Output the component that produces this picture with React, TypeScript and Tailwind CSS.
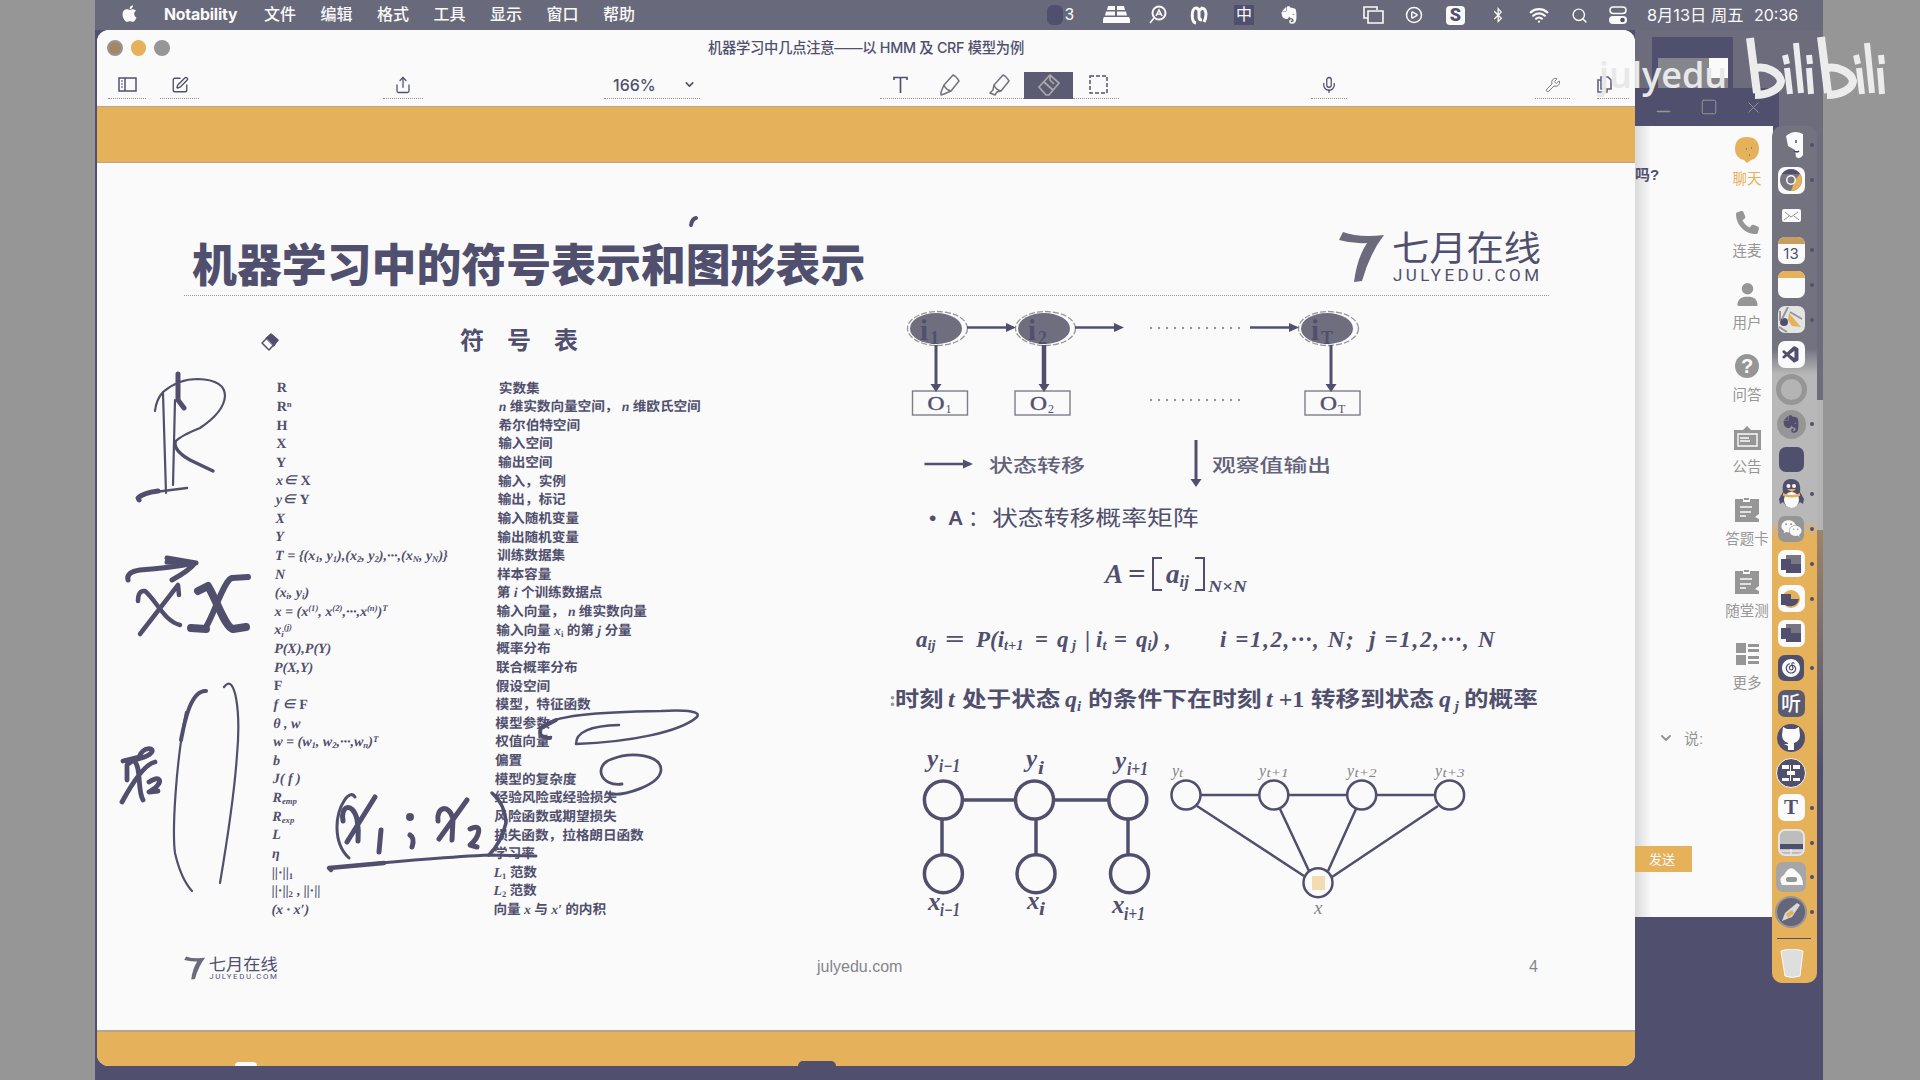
import React from "react";
import {
  FaApple, FaGithub, FaQq, FaWeixin, FaEvernote, FaBluetoothB, FaChrome, FaPhone, FaUser, FaCommentDots,
} from "react-icons/fa6";
import { SiNeteasecloudmusic } from "react-icons/si";
import { VscVscode } from "react-icons/vsc";
import { ChevronDown, Mic, Minus, PanelLeft, Search, Share, Square, SquarePen, Wifi, Wrench, X, CirclePlay } from "lucide-react";

const NAVY = "#50506e";
const GRAY = "#969696";
const SERIF = "font-['Liberation_Serif','Noto_Sans_CJK_SC',serif]";
const SANS = "font-['Liberation_Sans','Noto_Sans_CJK_SC',sans-serif]";
const SVG_SERIF = "'Liberation Serif','Noto Sans CJK SC',serif";

function MenuBar() {
  const menus = ["文件", "编辑", "格式", "工具", "显示", "窗口", "帮助"];
  return (
    <header className="flex h-[30px] w-full items-center bg-[#69697c] text-[16px] leading-none text-[#fafafa]">
      <FaApple className="-mt-1 ml-[25px] size-[19px]" />
      <span className="ml-[25px] w-[75px] whitespace-nowrap font-['Inter'] text-[15.8px] font-bold tracking-[-0.2px]">Notability</span>
      <nav className="ml-[25px] flex gap-[24.5px] font-medium">
        {menus.map((m) => <span key={m} className="w-8">{m}</span>)}
      </nav>
      <div className="ml-[412px] flex items-center">
        <span className="h-[20px] w-[16px] rounded-[6px] bg-[#50506e]" />
        <span className="ml-[2px] w-[10px]">3</span>
        <svg className="ml-[28px]" width="27" height="18" viewBox="0 0 27 18" fill="#fafafa">
          <path d="M5 0h7v4H4zM14 0h7l1 4h-8zM3 5.500h9v4H2zM14 5.500h9l1 4H14zM1 11h25l1 2v4H0v-4z" />
        </svg>
        <svg className="ml-[19px]" width="18" height="20" viewBox="0 0 18 20" fill="none" stroke="#fafafa" strokeWidth="2">
          <circle cx="10" cy="8" r="6.500" /><path d="M5 13l-4 5M7 11l3-6 3 6M8 9h4" strokeWidth="1.600" />
        </svg>
        <svg className="ml-[23px]" width="18" height="19" viewBox="0 0 18 19" fill="none" stroke="#fafafa" strokeWidth="3">
          <path d="M6 17c-5-1-5-15 0-15q3 0 3 4v5q0 3 3 3M11 2c6 0 6 8 3 14M9 5l3-3" />
        </svg>
        <span className="ml-[26px] flex h-5 w-5 items-center justify-center bg-[#50506e] text-[16px]">中</span>
        <FaEvernote className="ml-[25px] size-[20px]" />
        <svg className="ml-[64px]" width="21" height="18" viewBox="0 0 21 18" fill="none" stroke="#fafafa" strokeWidth="1.600">
          <path d="M5 12H1V1h13v3M5 5h15v12H5z" />
        </svg>
        <CirclePlay className="ml-[21px] size-[18px]" strokeWidth={2} />
        <span className="ml-[23px] flex h-[19px] w-[19px] items-center justify-center rounded bg-[#fafafa] font-['Roboto'] text-[18px] font-black text-[#50506e]">S</span>
        <FaBluetoothB className="ml-[25px] size-[16px]" />
        <Wifi className="ml-[23px] size-[20px]" strokeWidth={2.6} />
        <Search className="ml-[22px] size-[17px]" strokeWidth={2} />
        <svg className="ml-[21px]" width="18" height="18" viewBox="0 0 18 18">
          <rect x="1" y="1" width="16" height="6.500" rx="3.200" fill="none" stroke="#fafafa" strokeWidth="1.500" />
          <rect x="0" y="10" width="18" height="8" rx="4" fill="#fafafa" /><circle cx="13.500" cy="14" r="2.300" fill={NAVY} />
        </svg>
        <span className="ml-[20px] w-[107px] whitespace-nowrap font-['Inter','Noto_Sans_CJK_SC'] text-[16.3px]">8月13日 周五</span>
        <span className="font-['Inter'] text-[16px]">20:36</span>
      </div>
    </header>
  );
}

function Tool({ className, children }: { className: string; children?: React.ReactNode }) {
  return <div className={"flex h-[28px] shrink-0 items-center border-b border-dotted border-[#969696] " + className}>{children}</div>;
}

function Toolbar() {
  return (
    <div className="flex h-[76px] flex-col bg-[#fafafa] text-[#50506e]">
      <div className="flex h-[36px] items-center">
        <div className="flex w-[611px] gap-[8px] pl-[10px]">
          <i className="size-[15.500px] rounded-full border-2 border-[#969696] bg-[#a58562]" />
          <i className="size-[15.500px] rounded-full bg-[#e5b15b]" />
          <i className="size-[15.500px] rounded-full bg-[#969696]" />
        </div>
        <div className="whitespace-nowrap font-['Inter','Noto_Sans_CJK_SC'] text-[14.3px] font-medium tracking-[-0.27px]">机器学习中几点注意——以 HMM 及 CRF 模型为例</div>
      </div>
      <div className="flex items-center pt-[5px]">
        <Tool className="ml-[11px] w-[38px] justify-center">
          <svg width="19" height="15" viewBox="0 0 19 15" fill="none" stroke={NAVY} strokeWidth="1.500">
            <rect x="1" y="1" width="17" height="13" /><path d="M7 1v13" /><path d="M3 4h2M3 7h2M3 10h2" strokeWidth="1" />
          </svg>
        </Tool>
        <Tool className="ml-[14px] w-[39px] justify-center"><SquarePen size={18} strokeWidth={1.8} /></Tool>
        <Tool className="ml-[184px] w-[40px] justify-center"><Share size={18} strokeWidth={1.7} /></Tool>
        <Tool className="ml-[181px] w-[96px] justify-between pr-[4px] pl-[9px]">
          <span className="font-['Inter'] text-[16px] font-medium">166%</span><ChevronDown size={13} strokeWidth={3} />
        </Tool>
        <Tool className="ml-[180px] w-[144px] justify-start">
          <svg className="ml-[13px]" width="15" height="18" viewBox="0 0 15 18" stroke={NAVY} fill="none" strokeWidth="1.700"><path d="M1 4V1.500h13V4M7.500 1v16" /></svg>
          <Marker className="ml-[31px]" wide={false} />
          <Marker className="ml-[28px]" wide />
        </Tool>
        <div className="flex h-[27px] w-[49px] items-center justify-center bg-[#5b5b74]">
          <svg width="22" height="22" viewBox="0 0 22 22" fill="none" stroke="#a9a9a9" strokeWidth="1.700">
            <path d="M1 13L12 1l9 8-10 12H8zM6 8l9 8M12 1v5l4 4" />
          </svg>
        </div>
        <Tool className="w-[46px] justify-start">
          <svg className="ml-[16px]" width="19" height="19" viewBox="0 0 19 19" fill="none" stroke={NAVY} strokeWidth="1.500" strokeDasharray="4 2"><rect x="1" y="1" width="17" height="17" /></svg>
        </Tool>
        <Tool className="ml-[192px] w-[36px] justify-center"><Mic size={18} strokeWidth={1.7} /></Tool>
        <Tool className="ml-[188px] w-[35px] justify-center text-[#77777f]"><Wrench size={16} strokeWidth={1.500} /></Tool>
        <Tool className="ml-[27px] w-[32px] justify-start">
          <svg width="15" height="17" viewBox="0 0 15 17" fill="none" stroke="#62627a" strokeWidth="1.600"><path d="M4 1h7l3 3v9H4zM4 4H1v12h9v-3" /></svg>
        </Tool>
      </div>
    </div>
  );
}

function Marker({ className, wide }: { className: string; wide: boolean }) {
  return (
    <svg className={className} width="22" height="22" viewBox="0 0 22 22" fill="none" stroke="#72727e" strokeWidth="1.500" strokeLinejoin="round">
      <path d="M5 11L14 1q3 1 6 6l-8 10q-5-1-7-6z" />
      <path d={wide ? "M5 11l-1 5-3 3 5 2 2-3 4-1" : "M5 11l-3 7v3l3-1 7-3"} />
    </svg>
  );
}

function Logo({ width, height }: { width: number; height: number }) {
  return (
    <svg width={width} height={height} viewBox="0 0 202 54">
      <path d="M4 3Q20 9 45 6Q31 24 23 52L15 53Q18 29 28 14Q14 15 0 11Z" fill="#6b6b7c" />
      <text x="53" y="32" fontSize="35" textLength="149" lengthAdjust="spacingAndGlyphs" fill={NAVY} fontFamily="'Noto Sans CJK SC',sans-serif">七月在线</text>
      <text x="54" y="52" fontSize="17" textLength="146" fill={NAVY} fontFamily="Roboto,sans-serif">JULYEDU.COM</text>
    </svg>
  );
}

const B = ({ children }: { children: React.ReactNode }) => <b className="not-italic">{children}</b>;
const Sub = ({ children }: { children: React.ReactNode }) => <sub className="text-[0.62em]">{children}</sub>;
const Sup = ({ children }: { children: React.ReactNode }) => <sup className="text-[0.62em]">{children}</sup>;

const symbols: [React.ReactNode, React.ReactNode][] = [
  [<B>R</B>, "实数集"],
  [<B>R<Sup>n</Sup></B>, <><i>n</i> 维实数向量空间， <i>n</i> 维欧氏空间</>],
  [<B>H</B>, "希尔伯特空间"],
  [<B>X</B>, "输入空间"],
  [<B>Y</B>, "输出空间"],
  [<>x∈ <B>X</B></>, "输入，实例"],
  [<>y∈ <B>Y</B></>, "输出，标记"],
  ["X", "输入随机变量"],
  ["Y", "输出随机变量"],
  [<>T = {"{"}(x<Sub>1</Sub>, y<Sub>1</Sub>),(x<Sub>2</Sub>, y<Sub>2</Sub>),···,(x<Sub>N</Sub>, y<Sub>N</Sub>){"}"}</>, "训练数据集"],
  ["N", "样本容量"],
  [<>(x<Sub>i</Sub>, y<Sub>i</Sub>)</>, <>第 <i>i</i> 个训练数据点</>],
  [<>x = (x<Sup>(1)</Sup>, x<Sup>(2)</Sup>,···,x<Sup>(n)</Sup>)<Sup>T</Sup></>, <>输入向量， <i>n</i> 维实数向量</>],
  [<>x<Sub>i</Sub><Sup>(j)</Sup></>, <>输入向量 <i>x</i><Sub>i</Sub> 的第 <i>j</i> 分量</>],
  ["P(X),P(Y)", "概率分布"],
  ["P(X,Y)", "联合概率分布"],
  [<B>F</B>, "假设空间"],
  [<>f ∈ <B>F</B></>, "模型，特征函数"],
  ["θ , w", "模型参数"],
  [<>w = (w<Sub>1</Sub>, w<Sub>2</Sub>,···,w<Sub>n</Sub>)<Sup>T</Sup></>, "权值向量"],
  ["b", "偏置"],
  ["J( f )", "模型的复杂度"],
  [<>R<Sub>emp</Sub></>, "经验风险或经验损失"],
  [<>R<Sub>exp</Sub></>, "风险函数或期望损失"],
  ["L", "损失函数，拉格朗日函数"],
  ["η", "学习率"],
  [<span className="not-italic">||·||<Sub>1</Sub></span>, <><i>L</i><Sub>1</Sub> 范数</>],
  [<span className="not-italic">||·||<Sub>2</Sub> , ||·||</span>, <><i>L</i><Sub>2</Sub> 范数</>],
  ["(x · x′)", <>向量 <i>x</i> 与 <i>x′</i> 的内积</>],
];

function SymbolTable() {
  return (
    <div className={"w-[783px] " + SERIF}>
      <h2 className="flex h-[83px] items-center gap-[23px] pt-[6px] pl-[363px] text-[24px] font-bold"><span>符</span><span>号</span><span>表</span></h2>
      <div className="origin-top -skew-x-[0.6deg] text-[13.6px] font-semibold">
        {symbols.map(([sym, text], i) => (
          <div key={i} className="flex h-[18.64px] items-center whitespace-nowrap pl-[180px] leading-none">
            <span className="w-[222px] text-[14px] italic">{sym}</span>
            <span>{text}</span>
          </div>
        ))}
      </div>
    </div>
  );
}

function Arrow({ x1, y1, x2, y2, w = 2.5 }: { x1: number; y1: number; x2: number; y2: number; w?: number }) {
  const head = x1 === x2
    ? `${x2 - 5.5},${y2 - 8} ${x2 + 5.5},${y2 - 8} ${x2},${y2}`
    : `${x2 - 10},${y2 - 4.5} ${x2 - 10},${y2 + 4.5} ${x2},${y2}`;
  return <g><line x1={x1} y1={y1} x2={x2 - (x1 === x2 ? 0 : 3)} y2={y2 - (x1 === x2 ? 3 : 0)} stroke={NAVY} strokeWidth={w} /><polygon points={head} fill={NAVY} /></g>;
}

function HmmDiagram() {
  const nodes = [{ x: 936, s: "1", bx: 912.5 }, { x: 1044, s: "2", bx: 1015 }, { x: 1327, s: "T", bx: 1305 }];
  return (
    <svg className="block" width="755" height="204" viewBox="880 296 755 204" fontFamily={SVG_SERIF}>
      {nodes.map((n) => (
        <g key={n.s}>
          <ellipse cx={n.x + 1.5} cy="328.500" rx="30" ry="17" fill="#fafafa" stroke={GRAY} strokeWidth="1.300" strokeDasharray="6 2" />
          <ellipse cx={n.x} cy="328.500" rx="26" ry="15.500" fill="#6e6e7e" />
          <text x={n.x - 16} y="340" fontSize="29" fontWeight="bold" fill={NAVY}>i</text>
          <text x={n.x - 6} y="344" fontSize="18" fontWeight="bold" fill={NAVY}>{n.s}</text>
          <rect x={n.bx} y="391" width="55" height="24" fill="none" stroke="#7d7d88" strokeWidth="1.400" />
          <text x={n.bx + 15} y="409.500" fontSize="18" textLength="17" lengthAdjust="spacingAndGlyphs" fill={NAVY} stroke={NAVY} strokeWidth="0.400">O</text>
          <text x={n.bx + 33} y="413" fontSize="12" fill={NAVY}>{n.s}</text>
        </g>
      ))}
      <Arrow x1={967} y1={327.5} x2={1016} y2={327.5} />
      <Arrow x1={1075} y1={327.5} x2={1124} y2={327.5} />
      <Arrow x1={1250} y1={327.5} x2={1299} y2={327.5} />
      <Arrow x1={936} y1={345} x2={936} y2={392} w={3} />
      <Arrow x1={1044} y1={345} x2={1044} y2={392} w={4.5} />
      <Arrow x1={1331} y1={345} x2={1331} y2={392} w={3} />
      <path d="M1150 328H1241M1150 400H1241" stroke={GRAY} strokeWidth="2" strokeDasharray="2 6" />
      <Arrow x1={924.5} y1={464} x2={973} y2={464} />
      <Arrow x1={1196} y1={440} x2={1196} y2={487} w={3} />
      <g fontSize="18" fill="#62627a" fontWeight="500">
        <text x="989" y="471.500" textLength="96" lengthAdjust="spacingAndGlyphs">状态转移</text>
        <text x="1212" y="471.500" textLength="119" lengthAdjust="spacingAndGlyphs">观察值输出</text>
      </g>
    </svg>
  );
}

function GraphDiagram() {
  const tops = [943.4, 1034.5, 1127.8];
  const bottoms = [943.4, 1036, 1129.5];
  const ys = [1186, 1273.8, 1361.7, 1449.6];
  const label = (x: number, y: number, m: string, s: string, w: number, dy = 5) => (
    <g key={m + s} fontStyle="italic" fontWeight="bold" fill={NAVY}>
      <text x={x} y={y} fontSize="25">{m}</text>
      <text x={x + 12} y={y + dy} fontSize="18" textLength={w} lengthAdjust="spacingAndGlyphs">{s}</text>
    </g>
  );
  return (
    <svg className="block" width="755" height="200" viewBox="880 734 755 200" fontFamily={SVG_SERIF}>
      <g stroke={NAVY} strokeWidth="3.500" fill="none">
        <path d="M963 800H1015M1054 800H1108M942 820V854M1036 820V854M1128 820V854" />
        {tops.map((x) => <circle key={x} cx={x} cy="800" r="19" />)}
        {bottoms.map((x) => <circle key={x} cx={x} cy="873.700" r="19" />)}
      </g>
      {label(927, 767, "y", "i−1", 21)}
      {label(1026, 767, "y", "i", 6, 7)}
      {label(1115, 769, "y", "i+1", 21, 6)}
      {label(928, 910, "x", "i−1", 20, 6)}
      {label(1027, 909, "x", "i", 6, 6)}
      {label(1112, 913, "x", "i+1", 21, 7)}
      <g stroke={NAVY} strokeWidth="2.500" fill="none">
        <path d="M1201 795H1259M1289 795H1347M1377 795H1435M1197 806L1304 876M1280 809L1309 871M1356 809L1328 871M1438 806L1332 877" />
        {ys.map((x) => <circle key={x} cx={x} cy="795" r="14.500" />)}
        <circle cx="1318" cy="882.700" r="14.500" />
      </g>
      <rect x="1312" y="876" width="13" height="14" fill="#f2dcb4" />
      <g fontStyle="italic" fill="#85858c">
        {["t", "t+1", "t+2", "t+3"].map((s, i) => (
          <g key={s}><text x={[1172, 1259, 1347, 1435][i]} y="776" fontSize="16">y</text>
            <text x={[1179, 1266.5, 1354.5, 1442.5][i]} y="777" fontSize="12" textLength={i ? 22 : 4} lengthAdjust="spacingAndGlyphs">{s}</text></g>
        ))}
        <text x="1314" y="914" fontSize="19">x</text>
      </g>
    </svg>
  );
}

function Formulas() {
  return (
    <div className={"whitespace-nowrap leading-none " + SERIF}>
      <div className={"flex h-[34px] items-center pl-[49px] text-[21px] " + SANS}>
        <span className="w-[19px]">•</span><span className="w-[20px] text-[21px] font-bold">A</span><span className="w-[24px]">：</span>
        <span className="origin-left scale-x-[1.23]">状态转移概率矩阵</span>
      </div>
      <div className="flex h-[80px] items-center pl-[225px] text-[27px] font-semibold italic">
        <span className="w-[23px]">A</span><span className="w-[24px] origin-left scale-x-[1.15] not-italic">=</span>
        <span className="h-[34px] w-[10px] border-y-2 border-l-2 border-[#50506e]" />
        <span className="w-[33px] pl-[4px]">a<Sub>ij</Sub></span>
        <span className="h-[34px] w-[10px] border-y-2 border-r-2 border-[#50506e]" />
        <span className="origin-left scale-x-[1.12] self-end pb-[19px] pl-[3px] text-[17px]">N×N</span>
      </div>
      <div className="flex h-[50px] items-center pl-[36px] text-[23px] font-semibold italic">
        <span className="w-[29px]">a<Sub>ij</Sub></span><span className="w-[31px] origin-left scale-x-150 not-italic">=</span>
        <span className="w-[59px]">P(i<Sub>t+1</Sub></span><span className="w-[22px] not-italic">=</span><span className="w-[28px]">q<Sub> j</Sub></span>
        <span className="w-[11px] not-italic">|</span><span className="w-[18px]">i<Sub>t</Sub></span><span className="w-[22px] not-italic">=</span>
        <span className="w-[84px]">q<Sub>i</Sub>) ,</span>
        <span className="w-[149px] tracking-[1.6px]">i =1,2,···, N;</span><span className="tracking-[1.7px]">j =1,2,···, N</span>
      </div>
      <div className="flex h-[70px] items-center pl-[9px] text-[21px] font-semibold">
        <span className="w-[6px] text-[#969696]">:</span>
        <span className="w-[53px] origin-left scale-x-[1.15]">时刻</span><i className="w-[14px] text-[24px]">t</i>
        <span className="w-[103px] origin-left scale-x-[1.17]">处于状态</span><i className="w-[23px] text-[24px]">q<Sub>i</Sub></i>
        <span className="w-[178px] origin-left scale-x-[1.18]">的条件下在时刻</span><span className="w-[45px] text-[24px]"><i>t</i> +1</span>
        <span className="w-[128px] origin-left scale-x-[1.17]">转移到状态</span><i className="w-[25px] text-[24px]">q<Sub> j</Sub></i>
        <span className="origin-left scale-x-[1.17]">的概率</span>
      </div>
    </div>
  );
}

function Ink() {
  return (
    <svg className="pointer-events-none absolute inset-0" width="1538" height="867" viewBox="97 163 1538 867" fill="none" stroke={NAVY} strokeLinecap="round" strokeLinejoin="round">
      <path d="M696 218Q692 219 691 225" strokeWidth="4" />
      <path d="M178 374V400L184 408" strokeWidth="5" />
      <path d="M155 411Q156 400 163 392Q178 379 198 379Q225 380 225 396Q224 412 200 428Q180 436 175 442M163 393L166 493M175 400L173 485" strokeWidth="2.200" />
      <path d="M175 442Q174 451 190 460L213 471" strokeWidth="3.500" />
      <path d="M155 492L187 488" strokeWidth="2.500" />
      <path d="M139 500L138 498Q143 493 158 491" strokeWidth="5" />
      <path d="M128 580Q126 572 140 570Q170 568 195 563Q190 570 172 580M167 558L196 563L167 562" strokeWidth="5" />
      <path d="M138 601Q138 590 145 591C156 600 164 621 180 625M140 634L178 585L179 595" strokeWidth="4.500" />
      <path d="M198 591L208 586C217 601 225 627 233 629L246 627M191 628L206 629" strokeWidth="8" />
      <path d="M206 627C215 612 224 580 232 578L248 577" strokeWidth="6" />
      <path d="M206 691C190 690 184 725 181 740" strokeWidth="4" />
      <path d="M186 712C176 762 172 830 175 853Q181 879 192 891M224 687C235 672 241 710 237 755Q234 800 220 883" strokeWidth="2.200" />
      <path d="M122 802C134 780 145 764 155 762M123 761L139 757C144 745 156 748 151 753C145 760 134 757 127 765V780M133 759C142 767 137 790 143 800M149 782C160 775 163 781 155 788L149 792L158 791" strokeWidth="4.800" />
      <path d="M355 797C350 788 337 806 337 827Q337 847 349 858" strokeWidth="3" />
      <path d="M343 821C340 806 352 801 357 819Q359 830 358 841M375 797L347 842M381 830L379 852M410 835Q415 838 412 847M438 821C436 807 449 803 453 819L452 840M467 800L439 839M470 829C484 822 479 838 470 845L477 847" strokeWidth="5" />
      <circle cx="410" cy="817" r="3" strokeWidth="2" fill={NAVY} />
      <path d="M492 793Q505 804 506 823Q501 843 489 855" strokeWidth="3.500" />
      <path d="M331 870L329 868Q440 857 490 855L536 856" strokeWidth="3" />
      <path d="M331 870L329 868L384 863" strokeWidth="4.500" />
      <path d="M551 737Q538 740 541 728C550 715 600 712 661 711Q703 709 697 717C680 732 630 742 576 744Q576 726 619 725" strokeWidth="2.500" />
      <path d="M550 738Q537 738 541 728L556 720" strokeWidth="4" />
      <path d="M622 784C600 787 593 765 612 759C632 751 661 755 661 770C660 785 625 796 609 794" strokeWidth="2.800" />
      <path d="M262 343L271 334L278 340L269 350Z" strokeWidth="1.500" fill="#fafafa" />
      <path d="M266 338L271 334L278 340L274 346Z" strokeWidth="1" fill={NAVY} />
    </svg>
  );
}

function Slide() {
  return (
    <section className="relative flex h-[867px] flex-col bg-[#fafafa] text-[#50506e]">
      <div className="flex h-[133px]">
        <div className="ml-[87px] flex w-[1365px] justify-between border-b border-dotted border-[#969696]">
          <h1 className="mt-[69px] ml-[8px] h-[60px] whitespace-nowrap font-['Noto_Sans_CJK_SC'] text-[44.9px] leading-[62px] font-black">机器学习中的符号表示和图形表示</h1>
          <div className="mt-[66px] mr-[8px]"><Logo width={202} height={54} /></div>
        </div>
      </div>
      <div className="flex h-[638px]">
        <SymbolTable />
        <div><HmmDiagram /><Formulas /><GraphDiagram /></div>
      </div>
      <footer className="flex h-[66px] items-center pl-[87px] font-['Liberation_Sans'] text-[16px] text-[#85858c]">
        <span className="w-[633px]"><Logo width={94} height={25} /></span>
        <span className="w-[712px]">julyedu.com</span><span>4</span>
      </footer>
      <Ink />
    </section>
  );
}

function NotabilityWindow() {
  return (
    <main className="absolute top-[30px] left-[2px] flex h-[1036px] w-[1538px] flex-col overflow-hidden rounded-[12px] bg-[#fafafa]">
      <Toolbar />
      <div className="h-[58px] shrink-0 border-y border-b-2 border-[#b5a68c] bg-[#e5b15b]" />
      <div className="-mt-px"><Slide /></div>
      <div className="flex grow items-end border-t-2 border-[#b5a68c] bg-[#e5b15b] pl-[138px]">
        <span className="h-[4px] w-[22px] rounded-t-full bg-[#fafafa]" />
        <span className="ml-[541px] h-[5px] w-[38px] rounded-t-full bg-[#50506e]" />
      </div>
    </main>
  );
}

function Clipboard() {
  return (
    <svg width="24" height="24" viewBox="0 0 24 24"><path d="M0 1h8v3h7V1h9v15l-4 3 4 2v3H0z" fill={GRAY} /><path d="M9 0h5v2H9z" fill={GRAY} /><path d="M5 9h12M5 14h11M5 18h6" stroke="#fafafa" strokeWidth="1.500" /></svg>
  );
}

function ChatWindow() {
  const items: { label: string; icon: React.ReactNode }[] = [
    { label: "聊天", icon: <svg width="26" height="26" viewBox="0 0 26 26"><path d="M13 0q12 0 12 12 0 9-8 11l-4 3-3-3Q1 21 1 12 1 0 13 0z" fill="#e5b15b" /><path d="M12 12h1M17 11h1M15 18h1" stroke={NAVY} /></svg> },
    { label: "连麦", icon: <FaPhone size={23} className="-scale-x-100 rotate-90" /> },
    { label: "用户", icon: <FaUser size={23} /> },
    { label: "问答", icon: <span className="flex size-[24px] items-center justify-center rounded-full bg-[#969696] text-[20px] font-bold text-[#fafafa]">?</span> },
    { label: "公告", icon: <svg width="27" height="24" viewBox="0 0 27 24"><path d="M9 4l4-4 4 4h10v20H0V4z" fill={GRAY} /><path d="M4 8h19v12H4zM6 12h9M6 15h10" fill="none" stroke="#fafafa" strokeWidth="1.400" /></svg> },
    { label: "答题卡", icon: <Clipboard /> },
    { label: "随堂测", icon: <Clipboard /> },
    { label: "更多", icon: <svg width="23" height="22" viewBox="0 0 23 22" fill={GRAY}><path d="M0 0h10v10H0zM12 1h11v3H12zM12 6h11v3H12zM0 12h10v10H0zM12 13h11v3H12zM12 18h11v3H12z" /></svg> },
  ];
  return (
    <aside className={"absolute top-[88px] left-[1540px] h-[829px] w-[144px] bg-[#50506e] leading-none text-[#969696] " + SANS}>
      <div className="flex h-[38px] items-center gap-[26px] pl-[18px]"><Minus size={21} strokeWidth={1.500} className="mt-[8px]" /><Square size={18} strokeWidth={1.300} /><X size={19} strokeWidth={1.200} /></div>
      <div className="flex h-[791px] w-[138px] bg-linear-to-r from-[#dadada] via-[#fafafa] via-12% to-[#fafafa]">
        <div className="flex w-[78px] shrink-0 flex-col">
          <p className="mt-[41px] h-[14px] whitespace-nowrap text-[15px] font-bold text-[#50506e]">吗?</p>
          <div className="mt-[549px] flex items-center gap-[10px] pl-[23px] text-[15px]"><ChevronDown size={16} strokeWidth={3} className="shrink-0" /><span className="whitespace-nowrap">说:</span></div>
          <div className="mt-[100px] flex h-[26px] w-[57px] items-center justify-center bg-[#e5b15b] pr-[3px] text-[13px] text-[#fafafa]">发送</div>
        </div>
        <div className="flex w-[68px] shrink-0 flex-col pt-[10px]">
          {items.map((it, i) => (
            <div key={it.label} className={"flex h-[72px] flex-col items-center " + (i === 0 ? "text-[#e5b15b]" : "")}>
              <div className="flex h-[28px] items-center">{it.icon}</div>
              <span className="mt-[8px] whitespace-nowrap text-[14.5px]">{it.label}</span>
            </div>
          ))}
        </div>
      </div>
    </aside>
  );
}

const tile = "flex size-[27px] items-center justify-center overflow-hidden rounded-[7px] ";
function OfficeTile({ round }: { round?: boolean }) {
  return <div className={tile + "bg-[#fafafa]"}><svg width="22" height="20" viewBox="0 0 22 20">
    {round ? <circle cx="11" cy="10" r="9" fill="#e5b15b" /> : <rect x="6" y="1" width="15" height="18" fill="#777784" />}
    <path d={round ? "M2 10h17a9 9 0 0 1-17 2z" : "M6 10h15v9H6z"} fill={NAVY} /><rect x="1" y="5" width="10" height="11" fill={NAVY} /></svg></div>;
}

function Dock() {
  const icons: { el: React.ReactNode; dot?: boolean }[] = [
    { el: <svg width="27" height="28" viewBox="0 0 27 28"><path d="M8 5Q16-2 25 3v21q-3 5-7 2l-1-7-7-4Z" fill="#fafafa" /><path d="M18 9v3M16 20q3 2 5 0" stroke={NAVY} strokeWidth="1.500" /></svg>, dot: true },
    { el: <div className={tile + "bg-[#fafafa]"}><svg width="22" height="22" viewBox="0 0 22 22"><circle cx="11" cy="11" r="11" fill="#77777f" /><path d="M20 5a11 11 0 0 1-9 17l4-11z" fill="#e5b15b" /><path d="M2 5a11 11 0 0 1 18 0H11z" fill={NAVY} /><circle cx="11" cy="11" r="5" fill="#fafafa" /><circle cx="11" cy="11" r="3.500" fill="#77777f" /></svg></div>, dot: true },
    { el: <svg width="19" height="13" viewBox="0 0 19 13"><rect width="19" height="13" rx="2" fill="#fafafa" /><path d="M3 3l6 5 7-5M2 11l5-4M17 11l-5-4" fill="none" stroke={GRAY} /></svg> },
    { el: <div className={tile + "flex-col !justify-start bg-[#fafafa] font-['Inter'] text-[15px] leading-[20px] text-[#50506e]"}><i className="h-[7px] w-full shrink-0 bg-[#c79d60]" />13</div>, dot: true },
    { el: <div className={tile + "!items-start bg-[#fafafa]"}><i className="h-[7px] w-full bg-[#e5b15b]" /></div>, dot: true },
    { el: <div className={tile + "bg-[#e4e4e4]"}><svg width="26" height="26" viewBox="0 0 26 26"><path d="M11 6l12 14-9-1-4-6z" fill="#e5b15b" /><circle cx="6" cy="15" r="4" fill={NAVY} /><path d="M2 4v10M12 5l12 7M1 20l8 5M10 0L4 12" stroke={GRAY} strokeWidth="2" /></svg></div>, dot: true },
    { el: <div className={tile + "bg-[#fafafa] text-[#50506e]"}><VscVscode size={20} /></div> },
    { el: <div className="size-[31px] rounded-full border-5 border-[#969696] bg-[#b4b4b4]" /> },
    { el: <div className="flex size-[29px] items-center justify-center rounded-full bg-[#969696] text-[#50506e]"><FaEvernote size={20} /></div>, dot: true },
    { el: <div className={tile + "!size-[25px] bg-[#50506e]"} /> },
    { el: <svg width="27" height="32" viewBox="0 0 27 32"><path d="M13 1C5 1 4 8 5 14L1 21l1 5 3-2q8 12 17 0l3 2 1-5-4-7C23 7 21 1 13 1z" fill={NAVY} /><ellipse cx="13.500" cy="22" rx="7.500" ry="8" fill="#fafafa" /><circle cx="10.500" cy="8" r="2" fill="#fafafa" /><circle cx="16" cy="8" r="2" fill="#fafafa" /><path d="M9 11h9l-4 3zM5 15q9 4 17 0v3q-8 3-17 0z" fill="#e5b15b" /></svg>, dot: true },
    { el: <div className={tile + "!size-[26px] bg-[#969696] text-[#fafafa]"}><FaWeixin size={21} /></div>, dot: true },
    { el: <OfficeTile />, dot: true },
    { el: <OfficeTile round />, dot: true },
    { el: <OfficeTile /> },
    { el: <div className={tile + "!size-[26px] bg-[#50506e] text-[#fafafa]"}><SiNeteasecloudmusic size={18} /></div>, dot: true },
    { el: <div className={tile + "bg-[#5b5b70] text-[20px] font-medium text-[#fafafa] font-['Noto_Sans_CJK_SC']"}>听</div> },
    { el: <div className="flex size-[28px] items-center justify-center rounded-full bg-[#50506e]"><svg width="20" height="24" viewBox="0 0 20 24" fill="#fafafa"><path d="M2 1l4 2h8l4-2 1 8q0 6-6 8v7H7v-4l-4-2 4 0v-1Q1 15 1 9z" /></svg></div> },
    { el: <div className="flex size-[30px] items-center justify-center rounded-full border border-[#fafafa] bg-[#50506e]"><svg width="20" height="20" viewBox="0 0 20 20"><path d="M1 2h7v4H1zM12 2h7v4h-7zM6 8h8v4H6zM1 15h7v3H1zM12 15h7v3h-7zM9 2h1v16h-1z" fill="#fafafa" /></svg></div> },
    { el: <div className={tile + "bg-[#fafafa] font-['Liberation_Serif'] text-[21px] font-bold text-[#50506e]"}>T</div>, dot: true },
    { el: <div className={tile + "border-2 border-[#e4e4e4] bg-[#bdbdbd]"}><svg width="23" height="23"><path d="M0 13h23v5H0z" fill={NAVY} /><path d="M0 20h23M11 18v5" stroke="#fafafa" /></svg></div>, dot: true },
    { el: <div className="flex h-[30px] w-[30px] items-center justify-center rounded-[7px] bg-[#a6a6a6]"><svg width="24" height="20" viewBox="0 0 24 20"><path d="M3 18q-4-7 2-10Q11-4 18 5q6 4 6 13z" fill="#fafafa" /><rect x="7" y="10" width="11" height="5" rx="2" fill={GRAY} /></svg></div>, dot: true },
    { el: <div className="flex size-[32px] items-center justify-center rounded-full border-2 border-[#969696] bg-[#66667a]"><svg width="22" height="22" viewBox="0 0 22 22"><path d="M2 20l3-8L17 2l3 2-8 12z" fill="#d8d8d8" /><path d="M6 13l6-4 2 3-6 5z" fill="#e5b15b" /></svg></div>, dot: true },
  ];
  return (
    <aside className="absolute top-[126px] left-[1677px] flex h-[857px] w-[45px] flex-col rounded-[10px] bg-[linear-gradient(to_bottom,#73737f_26%,#b8b8b8_29%,#b8b8b8_46%,#e5b15b_48%)] pt-[2px]">
      {icons.map((ic, i) => (
        <div key={i} className="flex h-[34.86px] shrink-0 items-center">
          <div className="flex w-[40px] shrink-0 justify-center pr-[2px]">{ic.el}</div>
          {ic.dot && <i className="-ml-[2px] size-[4px] rounded-full bg-[#50506e]" />}
        </div>
      ))}
      <div className="mt-[8px] ml-[5px] h-px w-[34px] bg-[#50506e]" />
      <svg className="mt-[10px] ml-[8px]" width="24" height="29" viewBox="0 0 24 29"><path d="M1 2q11-4 22 0l-3 25q-8 3-15 0z" fill="#dedede" stroke="#fafafa" /></svg>
    </aside>
  );
}

function Watermark() {
  return (
    <div className="absolute top-[34px] left-[1504px] flex w-[290px] items-start">
      <span className="mt-[16px] w-[146px] whitespace-nowrap font-['Open_Sans'] text-[36px] leading-[50px] font-semibold text-[#e8e8e8]">julyedu</span>
      <svg className="shrink-0" width="142" height="66" viewBox="1744 34 142 66" fill="none" stroke="#ececec">
        <g strokeWidth="8">
          <path d="M1749 38l7 55M1820 37l7 56" />
          <path d="M1755 68c10-2 23 4 25 13c-1 9-14 14-26 14M1826 68c10-2 24 4 26 13c-1 9-14 14-26 14" />
        </g>
        <g strokeWidth="6">
          <path d="M1786 68l3 26M1795 43l5 50M1808 68l2 26M1858 68l3 26M1866 43l5 50M1879 68l2 26M1784 55l2 9M1808 55l1 9M1855 55l2 9M1880 55l1 9" />
        </g>
      </svg>
    </div>
  );
}

export default function App() {
  return (
    <div className={"h-[1080px] w-[1920px] overflow-hidden bg-[#969696] pl-[95px] " + SANS}>
      <div className="relative h-[1080px] w-[1728px] bg-[#50506e]">
        <MenuBar />
        <div className="absolute top-[30px] right-0 h-[370px] w-[188px] bg-[#6c6c7d]" />
        <div className="absolute top-[400px] right-0 h-[130px] w-[50px] bg-[#b4b4b4]" />
        <div className="absolute top-[530px] right-0 h-[240px] w-[50px] bg-linear-to-b from-[#9e8466] to-[#50506e]" />
        <div className="absolute top-[37px] left-[1557px] h-[51px] w-[81px] bg-[#50506e]">
          <div className="mt-[21px] ml-[6px] flex h-[30px] w-[70px] justify-end bg-[#85858c]"><i className="h-[20px] w-[19px] bg-[#fafafa]" /></div>
        </div>
        <ChatWindow />
        <Dock />
        <NotabilityWindow />
        <Watermark />
      </div>
    </div>
  );
}
